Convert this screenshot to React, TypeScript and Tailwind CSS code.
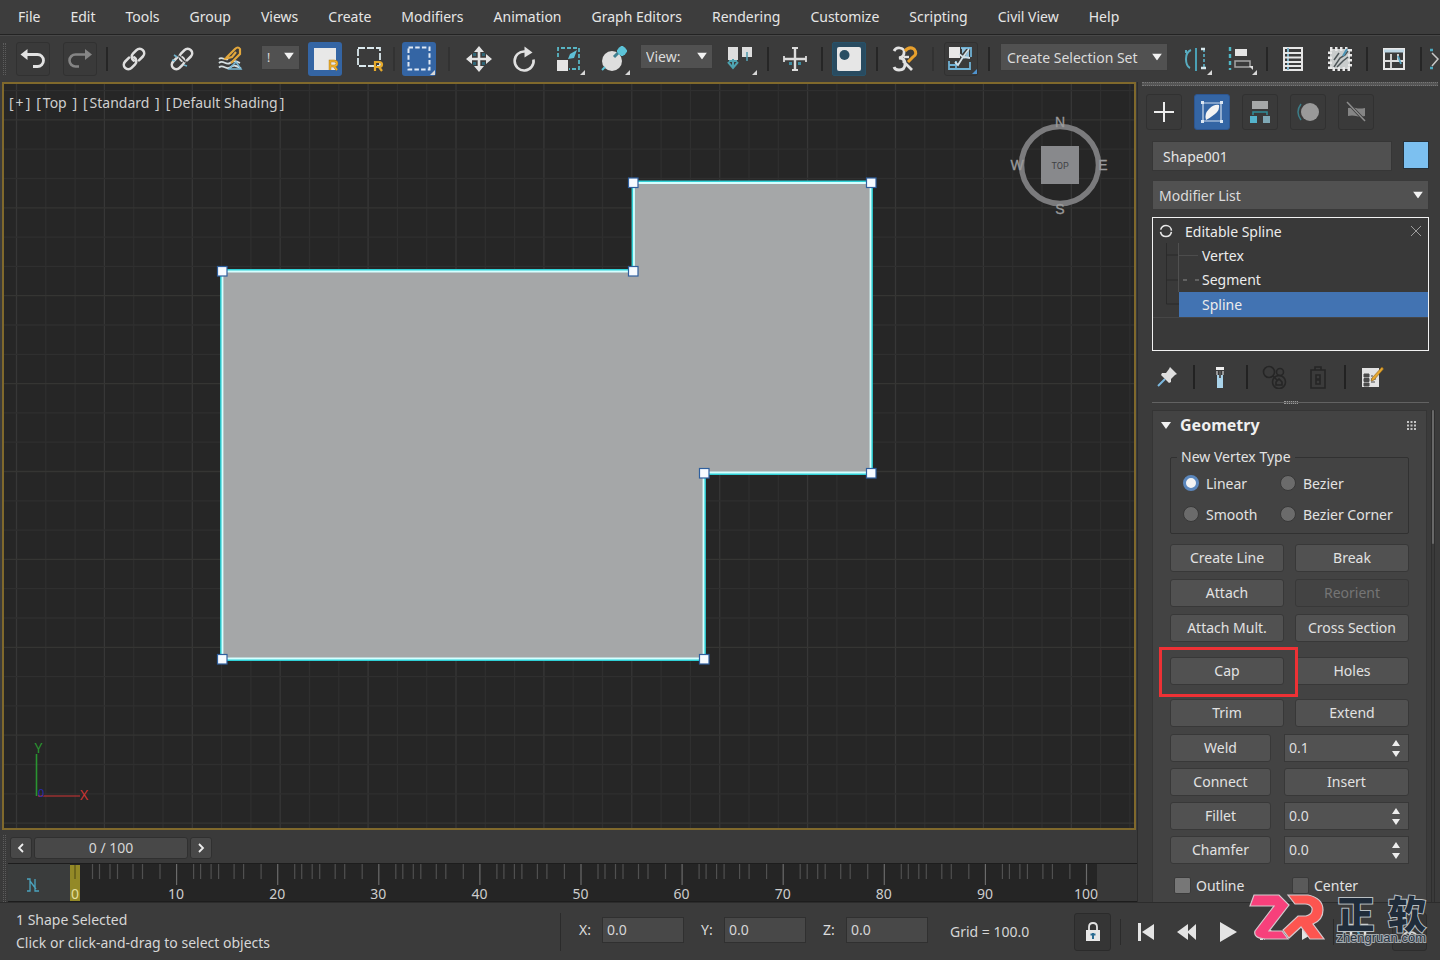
import React, { useState } from "react";

type Kids = { children?: React.ReactNode };

const MENUS = [
  "File", "Edit", "Tools", "Group", "Views", "Create", "Modifiers", "Animation",
  "Graph Editors", "Rendering", "Customize", "Scripting", "Civil View", "Help",
];

const Corner = ({ color = "#d8d8d8" }: { color?: string }) => <path d="M33 28v5h-5z" fill={color} />;

function Tool({ label, active, framed, children }: Kids & { label: string; active?: boolean; framed?: boolean }) {
  return (
    <button
      type="button"
      aria-label={label}
      className={
        "flex h-[34px] w-[34px] shrink-0 items-center justify-center rounded-[3px] " +
        (active ? "bg-[#3465a4]" : framed ? "border border-[#313131] bg-[#3a3a3a]" : "")
      }
    >
      <svg viewBox="0 0 34 34" className="h-[34px] w-[34px] shrink-0" fill="none">
        {children}
      </svg>
    </button>
  );
}

const Sep = () => <span className="block h-[24px] w-[2px] shrink-0 bg-[#262626]" />;

function Triangle({ className = "" }: { className?: string }) {
  return (
    <svg viewBox="0 0 10 7" className={"pointer-events-none h-[7px] w-[10px] " + className}>
      <path d="M0 0h10L5 7z" fill="#f2f2f2" />
    </svg>
  );
}

function Drop({ label, text, className, pad }: { label: string; text: string; className: string; pad: string }) {
  return (
    <div className={"relative shrink-0 " + className}>
      <select
        aria-label={label}
        className={"h-full w-full appearance-none border border-[#3a3a3a] bg-[#515151] text-[#dcdcdc] outline-none " + pad}
      >
        <option>{text}</option>
      </select>
      <Triangle className="absolute right-[6px] top-1/2 -translate-y-1/2" />
    </div>
  );
}

function Chain() {
  return (
    <g transform="rotate(-45 17 17)" stroke="#dedede" strokeWidth="2.6" strokeLinecap="round">
      <path d="M14.500 12.500H9a4.500 4.500 0 0 0 0 9h5a4.500 4.500 0 0 0 4.300-5.500" />
      <path d="M19.500 21.500H25a4.500 4.500 0 0 0 0-9h-5a4.500 4.500 0 0 0-4.300 5.500" />
    </g>
  );
}

function Toolbar() {
  return (
    <div className="flex h-[47px] shrink-0 items-center overflow-hidden border-t border-[#484848] bg-[#3b3b3b]">
      <span className="ml-[3px] mr-[10px] h-[32px] w-[3px] shrink-0 border-x border-dotted border-[#5c5c5c]" />
      <div className="flex items-center gap-[13px]">
        <Tool label="Undo" framed>
          <path d="M7 12.500h14.500a6 6 0 0 1 0 12H17" stroke="#e2e2e2" strokeWidth="2.800" />
          <path d="M4.500 12.500 11.500 7v11z" fill="#e2e2e2" />
        </Tool>
        <Tool label="Redo" framed>
          <path d="M26 12.500H12.500a6 6 0 0 0 0 12H16" stroke="#858585" strokeWidth="2.600" />
          <path d="m29 12.500-7-5.500v11z" fill="#858585" />
        </Tool>
      </div>
      <div className="mx-[9px]"><Sep /></div>
      <div className="flex items-center gap-[14px]">
        <Tool label="Select and Link"><Chain /></Tool>
        <Tool label="Unlink Selection">
          <Chain />
          <path d="m14 14 6 6" stroke="#3b3b3b" strokeWidth="1.500" />
          <path d="m9 13 3 2M19 23l3 1M7 18l3 1" stroke="#6fb3cc" strokeWidth="1.600" />
        </Tool>
        <Tool label="Bind to Space Warp">
          <path d="M6 21c4-4 7 3 11 0s6-2 10 0M6 25.500c4-4 7 3 11 0s6-2 11 1M6 17c3-3 6 2 9 0" stroke="#d5dfe2" strokeWidth="1.800" />
          <path d="m23 20 5 7H16z" stroke="#7ab9d6" strokeWidth="1.500" />
          <path d="m13 16 9-9q3-3 5 0v5l-9 9M11 17l8-2 4-5" stroke="#e2a73c" strokeWidth="2.200" />
        </Tool>
        <Drop label="Selection Filter" text="!" className="mb-[6px] h-[25px] w-[39px]" pad="pl-[5px] text-[12px]" />
      </div>
      <div className="ml-[8px] flex items-center gap-[10px]">
        <Tool label="Select Object" active>
          <path d="M6 6h22v22H6z" fill="#e8e8e8" />
          <path d="M22 28v-9h4q3 0 3 2.500T26 24h-4m4 0 3 4" stroke="#b07c17" strokeWidth="2.400" />
          <path d="M22 28v-9h4q3 0 3 2.500T26 24h-4m4 0 3 4" stroke="#efb02e" strokeWidth="1.400" />
        </Tool>
        <Tool label="Rectangular Selection Region">
          <path d="M6 6h22v18H6z" stroke="#dbe9ee" strokeWidth="1.800" strokeDasharray="7 2" />
          <path d="M23 29v-9h4q3 0 3 2.500T27 25h-4m4 0 3 4" stroke="#e6aa2b" strokeWidth="2.200" />
        </Tool>
      </div>
      <div className="mx-[7px] opacity-40"><Sep /></div>
      <Tool label="Window Crossing" active>
        <path d="M6.500 5.500h21v22h-21z" stroke="#dfe9f5" strokeWidth="2" strokeDasharray="4.500 2.200" />
        <Corner />
      </Tool>
      <div className="mx-[12px] opacity-40"><Sep /></div>
      <div className="flex items-center gap-[11px]">
        <Tool label="Select and Move">
          <path d="M17 7v20M7 17h20" stroke="#e4e4e4" strokeWidth="2.600" />
          <path d="m17 4 5 6H12zM17 30l5-6H12zM4 17l6-5v10zM30 17l-6-5v10z" fill="#e4e4e4" />
          <path d="M11 11h3v3h-3zM20 11h3v3h-3zM11 20h3v3h-3zM20 20h3v3h-3z" fill="#2f6576" />
        </Tool>
        <Tool label="Select and Rotate">
          <path d="M18 9.500a9.500 9.500 0 1 0 8.500 8" stroke="#e0e0e0" strokeWidth="2.600" />
          <path d="m17.500 4.500 8 6-8 5z" fill="#e0e0e0" />
        </Tool>
        <Tool label="Select and Scale">
          <path d="M6 15V6h21v21H17" stroke="#58b5c4" strokeWidth="1.800" strokeDasharray="4 2" />
          <path d="M5 18h11v11H5z" fill="#e4e4e4" />
          <path d="m25 8-3 8-6 1 2-5z" fill="#5fc0d6" />
          <Corner />
        </Tool>
        <Tool label="Select and Place">
          <circle cx="15" cy="19" r="10" fill="#dedede" />
          <path d="m17 15 5-5" stroke="#3f7f90" strokeWidth="3" />
          <circle cx="25" cy="9" r="4.500" fill="#5cc3d8" />
          <path d="M25 4v10M20 9h10" stroke="#5cc3d8" strokeWidth="2.500" />
          <path d="m5 28 3-3" stroke="#5cc3d8" strokeWidth="2" />
          <Corner />
        </Tool>
      </div>
      <div className="ml-[9px] flex items-center gap-[11px]">
        <Drop label="Reference Coordinate System" text="View:" className="mb-[6px] h-[25px] w-[73px]" pad="pl-[5px] text-[14px]" />
        <Tool label="Use Pivot Point Center">
          <path d="M4 5h10v13H4zM18 5h10v10H18z" fill="#dedede" />
          <path d="M23 10v9" stroke="#559daf" strokeWidth="1.600" />
          <path d="M9 17v9M4 20l5 6 5-6M5 19h8" stroke="#4ea3b0" strokeWidth="2" />
          <Corner />
        </Tool>
      </div>
      <div className="mx-[9px]"><Sep /></div>
      <Tool label="Select and Manipulate">
        <path d="M17 6v22M6 17h22" stroke="#dcdcdc" strokeWidth="2.400" />
        <path d="M14 6h6M14 28h6M6 14v6M28 14v6" stroke="#dcdcdc" strokeWidth="1.800" />
        <path d="M11 20h3v3h-3zM20 20h3v3h-3z" fill="#3c8ca0" />
      </Tool>
      <div className="mx-[9px]"><Sep /></div>
      <button type="button" aria-label="Keyboard Shortcut Override" className="flex h-[34px] w-[34px] shrink-0 items-center justify-center rounded-[2px] border border-[#275269] bg-[#294b60]">
        <svg viewBox="0 0 24 24" className="h-[24px] w-[24px]">
          <rect width="24" height="24" rx="2" fill="#e6e6e6" />
          <circle cx="7.500" cy="8" r="5" fill="#2a4f63" />
        </svg>
      </button>
      <div className="mx-[10px]"><Sep /></div>
      <Tool label="Snaps Toggle">
        <path d="M6 9q2-4 6-3 5 1 4 5 0 4-5 5 6 0 6 6t-6 6q-4 0-5-3M15 19l9 9" stroke="#e2e2e2" strokeWidth="2.800" />
        <path d="M17 9q4-5 9-2 4 5-1 8l-5 5" stroke="#e8a02c" strokeWidth="3" />
        <path d="m16 15 5 0" stroke="#e2e2e2" strokeWidth="2.400" />
      </Tool>
      <div className="mx-[10px] opacity-40"><Sep /></div>
      <Tool label="Angle Snap" framed>
        <path d="M5 5h11v11H5z" fill="#e8e8e8" />
        <path d="M17 6h10v9M5 19v8h21v-7M12 19v7M5 23h8" stroke="#6fb1d4" strokeWidth="1.800" />
        <path d="M18 6h5l-5 6zM25 8v7l-6 2z" fill="#8fc0dc" />
        <path d="m25 7-6 8-5 8-3-3M15 12l4 3 7 1" stroke="#d3dfe6" strokeWidth="1.800" />
        <path d="M33 27v5h-5z" fill="#4f93cf" />
      </Tool>
      <div className="mx-[10px]"><Sep /></div>
      <Drop label="Named Selection Sets" text="Create Selection Set" className="mb-[4px] h-[28px] w-[168px]" pad="pl-[6px] text-[14px]" />
      <div className="ml-[11px] flex items-center gap-[11px]">
        <Tool label="Mirror">
          <path d="M17 6v23" stroke="#4aa0b5" strokeWidth="2" />
          <path d="M12 8Q7 10 7 17t4 9M7 8v3" stroke="#58acc0" strokeWidth="2" />
          <path d="M25 7v18" stroke="#57a6ba" strokeWidth="1.800" strokeDasharray="3 2" />
          <path d="M22 26h5M22 7h4" stroke="#d7e7ec" strokeWidth="2.400" />
          <Corner />
        </Tool>
        <Tool label="Align">
          <path d="M6 5v23" stroke="#4fb7c6" strokeWidth="2.400" strokeDasharray="4 3" />
          <path d="M11 7h12v7H11z" fill="#e4e4e4" />
          <path d="M11 19h15v6H11z" stroke="#a5a5a5" strokeWidth="1.500" />
          <path d="M25 24h4v4" fill="#dedede" />
          <Corner />
        </Tool>
      </div>
      <div className="mx-[8px]"><Sep /></div>
      <div className="flex items-center gap-[13px]">
        <Tool label="Layer Explorer">
          <path d="M8 6h18v22H8z" stroke="#e6e6e6" strokeWidth="2" />
          <path d="M12 6v22" stroke="#7db2c9" strokeWidth="2" />
          <path d="M8 11h18M8 15.500h18M8 20h18M8 24h18" stroke="#e6e6e6" strokeWidth="1.800" />
        </Tool>
        <Tool label="Toggle Ribbon">
          <path d="M7 7h20v20H7z" fill="#c9cccc" />
          <path d="M7 7h20v20H7z" stroke="#e8e8e8" strokeWidth="4" strokeDasharray="2.500 2.500" />
          <path d="m11 25 6-9 5-3 3-4M14 25l6-6 5-4M11 18l5-7" stroke="#4d5558" strokeWidth="1.500" />
          <path d="m24 7-4 7" stroke="#4b94b6" strokeWidth="2" />
        </Tool>
      </div>
      <div className="mx-[9px]"><Sep /></div>
      <Tool label="Curve Editor">
        <path d="M7 7h20v20H7z" stroke="#e8e8e8" strokeWidth="2" />
        <path d="M7 9h20" stroke="#bcd6e4" strokeWidth="3" />
        <path d="M14 12v15M7 19h20M21 12v8" stroke="#dedede" strokeWidth="1.800" />
        <path d="m21 14 3 8" stroke="#5ba7c5" strokeWidth="1.800" />
      </Tool>
      <div className="ml-[9px] mr-[7px]"><Sep /></div>
      <button type="button" aria-label="More tools" className="shrink-0">
        <svg viewBox="0 0 12 26" className="h-[26px] w-[12px]" fill="none">
          <path d="m3 7 6 6-6 7" stroke="#c9c9c9" strokeWidth="1.500" />
          <path d="M1 4h3M1 22h3" stroke="#4ba6bd" strokeWidth="2.500" />
        </svg>
      </button>
    </div>
  );
}

const STEP = 29.3;
const PTS: [number, number][] = [
  [222, 271], [633, 271], [633, 182.5], [871, 182.5], [871, 473], [704, 473], [704, 659], [222, 659],
];
const OUTER = "221.500,270.500 633,270.500 633,182 871.500,182 871.500,473.500 704.500,473.500 704.500,659.500 221.500,659.500";
const INNER = "222.500,271.500 634,271.500 634,183 870.500,183 870.500,472.500 703.500,472.500 703.500,658.500 222.500,658.500";

function Viewport() {
  const cols = Array.from({ length: 90 }, (_, i) => i);
  const rows = Array.from({ length: 50 }, (_, i) => i);
  return (
    <div className="relative ml-[2px] mr-px min-h-[480px] flex-1 overflow-hidden border-2 border-[#80692c] bg-[#262626]">
      <svg className="absolute inset-0 h-full w-full" fill="none">
        <g transform="translate(-4 -84)">
          {cols.map((i) => (
            <path key={"c" + i} d={`M${16.500 + i * STEP} 80V1600`} stroke={i % 3 === 0 ? "#373737" : "#2f2f2f"} strokeWidth="1.3" />
          ))}
          {rows.map((i) => (
            <path key={"r" + i} d={`M0 ${90.600 + i * STEP}H2700`} stroke={i % 3 === 1 ? "#353533" : "#2f2f2f"} strokeWidth="1.3" />
          ))}
          <polygon points={OUTER} fill="#a5a7a8" stroke="#2fd0d6" strokeWidth="2.800" />
          <polygon points={INNER} stroke="#d5ffff" strokeWidth="1.800" />
          {PTS.map(([x, y]) => (
            <rect key={x + "-" + y} x={x - 4.500} y={y - 4.500} width="9.500" height="9.500" fill="#f7fbff" stroke="#2f5f9e" strokeWidth="1.200" />
          ))}
          <path d="M36.500 754v42" stroke="#2a9431" strokeWidth="1.600" />
          <path d="M38 796h42" stroke="#9a3030" strokeWidth="1.600" />
          <g fontFamily="Noto Sans, sans-serif" fontSize="14">
            <text x="34.500" y="753" fill="#2a9431">Y</text>
            <text x="80" y="800" fill="#c93434">X</text>
            <text x="38" y="797" fontSize="11" fill="#2a2ab0">0</text>
          </g>
        </g>
      </svg>
      <p className="relative flex gap-[6px] px-[5px] py-[8px] text-[14px] leading-[22px] text-[#cfcfcf]">
        {["+", "Top ", "Standard ", "Default Shading"].map((t) => (
          <span key={t} className="whitespace-pre">[<span className="px-[2px]">{t}</span>]</span>
        ))}
      </p>
      <svg viewBox="0 0 100 104" className="absolute right-[25px] top-[29px] h-[104px] w-[100px]" fill="none" aria-label="View cube">
        <circle cx="51" cy="52" r="38.500" stroke="#7b7b7d" strokeWidth="5.500" />
        <rect x="32" y="33" width="38" height="38" fill="#88898c" />
        <g fontFamily="Liberation Sans, sans-serif" fontSize="14" fill="#9a9a9b" stroke="#9a9a9b" strokeWidth=".3" textAnchor="middle">
          <text x="51" y="14">N</text>
          <text x="8" y="57">W</text>
          <text x="94" y="57">E</text>
          <text x="51" y="101">S</text>
        </g>
        <text x="51" y="56" fontFamily="Roboto, sans-serif" fontSize="9" fill="#404145" textAnchor="middle">TOP</text>
      </svg>
    </div>
  );
}

const MINOR = [17.500, 24.500, 35, 42.500, 58, 67.500, 85];

function Timeline() {
  const decades = Array.from({ length: 11 }, (_, i) => i);
  const step = "flex h-[22px] w-[22px] items-center justify-center rounded-[3px] border border-[#303030] bg-[#484848]";
  return (
    <div className="flex h-[72px] shrink-0 bg-[#3a3a3a]">
      <span className="ml-[3px] mr-[2px] mt-[5px] w-[3px] border-x border-dotted border-[#5c5c5c]" />
      <div className="flex min-w-0 flex-1 flex-col">
        <div className="flex h-[33px] items-center gap-[2px] pl-[2px] pt-[2px]">
          <button type="button" aria-label="Previous frame" className={step}>
            <svg viewBox="0 0 8 10" className="h-[10px] w-[8px]" fill="none"><path d="M6 1 2 5l4 4" stroke="#eee" strokeWidth="1.800" /></svg>
          </button>
          <button type="button" className="h-[22px] w-[154px] rounded-[3px] border border-[#303030] bg-[#484848] text-[14px] leading-[18px] text-[#d6d6d6]">0 / 100</button>
          <button type="button" aria-label="Next frame" className={step}>
            <svg viewBox="0 0 8 10" className="h-[10px] w-[8px]" fill="none"><path d="m2 1 4 4-4 4" stroke="#eee" strokeWidth="1.800" /></svg>
          </button>
        </div>
        <div className="flex flex-1 border-y border-[#1d1d1d]">
          <button type="button" aria-label="Open Mini Curve Editor" className="flex w-[62px] shrink-0 items-center justify-center bg-[#3a3c3c] pr-[12px] pt-[4px]">
            <svg viewBox="0 0 12 14" className="h-[14px] w-[12px]" fill="none">
              <path d="M0 1h3v12H0M3 3l6 8M8 1v12h4" stroke="#4ba3bd" strokeWidth="1.300" />
            </svg>
          </button>
          <svg className="h-[37px] min-w-0 flex-1 overflow-visible bg-[#252525]">
            <rect x="1027" width="40" height="37" fill="#383838" />
            <rect x="0" y="1" width="10" height="36" fill="#938927" />
            <path d="M5 1v14" stroke="#5c5618" strokeWidth="1.300" />
            {decades.map((d) => (
              <g key={d} transform={`translate(${5 + d * 101.1} 0)`}>
                {d > 0 && <path d="M.5 0v21" stroke="#6b6b6b" strokeWidth="1.200" />}
                {d < 10 && MINOR.map((m) => <path key={m} d={`M${m} 0v15`} stroke="#505050" strokeWidth="1.200" />)}
                <text x="0" y="35" fill={d ? "#cdcdcd" : "#e4df9c"} fontFamily="Noto Sans, sans-serif" fontSize="14" textAnchor="middle">{d * 10}</text>
              </g>
            ))}
          </svg>
        </div>
      </div>
    </div>
  );
}

function Tab({ label, active, children }: Kids & { label: string; active?: boolean }) {
  return (
    <button
      type="button"
      aria-label={label}
      className={"flex h-[36px] w-[36px] items-center justify-center rounded-[3px] border " + (active ? "border-[#2c5590] bg-[#3465a4]" : "border-[#313131] bg-[#3a3a3a]")}
    >
      <svg viewBox="0 0 24 24" className="h-[24px] w-[24px]" fill="none">{children}</svg>
    </button>
  );
}

function Btn({ children, disabled, className = "" }: Kids & { disabled?: boolean; className?: string }) {
  return (
    <button
      type="button"
      disabled={disabled}
      className={
        "h-[28px] rounded-[3px] border border-[#383838] text-[14px] leading-[20px] " +
        (disabled ? "bg-[#434343] text-[#757575] " : "bg-[#515151] text-[#e2e2e2] ") + className
      }
    >
      {children}
    </button>
  );
}

function Spinner({ label, value }: { label: string; value: string }) {
  return (
    <div className="relative h-[28px] flex-1 border border-[#383838] bg-[#525252]">
      <input aria-label={label} defaultValue={value} className="block h-[24px] w-full bg-transparent pl-[4px] text-[14px] text-[#dedede] outline-none" />
      <svg viewBox="0 0 8 18" className="pointer-events-none absolute right-[8px] top-[5px] h-[18px] w-[8px]" fill="#ededed">
        <path d="M4 0l4 6H0zM4 17l4-6H0z" />
      </svg>
    </div>
  );
}

function Pair({ left, right, off }: { left: string; right: string; off?: boolean }) {
  return (
    <div className="grid grid-cols-2 gap-[11px]">
      <Btn>{left}</Btn>
      <Btn disabled={off}>{right}</Btn>
    </div>
  );
}

function Geometry() {
  const [type, setType] = useState("Linear");
  return (
    <div className="flex min-h-0 flex-1 justify-between pl-[14px] pr-[5px] pt-[7px]">
      <section className="flex w-[275px] flex-col border border-b-0 border-[#353535] bg-[#434343] px-[17px]">
        <h2 className="-mx-[9px] flex h-[28px] items-center text-[16px] font-bold text-[#f0f0f0]">
          <Triangle />
          <span className="ml-[9px] flex-1">Geometry</span>
          <svg viewBox="0 0 9 9" className="mr-[2px] h-[9px] w-[9px]" fill="#c4c4c4">
            <path d="M0 0h2v2H0zM3.500 0h2v2h-2zM7 0h2v2H7zM0 3.500h2v2H0zM3.500 3.500h2v2h-2zM7 3.500h2v2H7zM0 7h2v2H0zM3.500 7h2v2h-2zM7 7h2v2H7z" />
          </svg>
        </h2>
        <fieldset className="mt-[7px] h-[88px] rounded-[2px] border border-[#313131] px-[12px]">
          <legend className="-ml-[6px] px-[4px] text-[14px] leading-[22px] text-[#e2e2e2]">New Vertex Type</legend>
          <div className="grid grid-cols-[97px_1fr] gap-y-[9px] pt-[4px]">
            {["Linear", "Bezier", "Smooth", "Bezier Corner"].map((t) => (
              <label key={t} className="flex h-[22px] items-center gap-[7px] whitespace-nowrap text-[14px] text-[#e2e2e2]">
                <input
                  type="radio"
                  name="vertex-type"
                  checked={type === t}
                  onChange={() => setType(t)}
                  className="h-[16px] w-[16px] appearance-none rounded-full border border-[#383838] bg-[#6b6b6b] checked:border-[3px] checked:border-[#5b87bd] checked:bg-[#f4f4f4]"
                />
                {t}
              </label>
            ))}
          </div>
        </fieldset>
        <div className="mt-[10px] flex flex-col gap-[7px]">
          <Pair left="Create Line" right="Break" />
          <Pair left="Attach" right="Reorient" off />
          <Pair left="Attach Mult." right="Cross Section" />
        </div>
        <div className="relative mb-[14px] mt-[15px]">
          <Pair left="Cap" right="Holes" />
          <span className="pointer-events-none absolute -bottom-[12px] -left-[11px] -top-[10px] w-[139px] border-[3px] border-[#ee3135]" />
        </div>
        <div className="flex flex-col gap-[7px]">
          <Pair left="Trim" right="Extend" />
          <div className="flex flex-col gap-[6px]">
            <div className="flex gap-[13px]"><Btn className="w-[101px]">Weld</Btn><Spinner label="Weld threshold" value="0.1" /></div>
            <div className="flex gap-[13px]"><Btn className="w-[101px]">Connect</Btn><Btn className="flex-1">Insert</Btn></div>
            <div className="flex gap-[13px]"><Btn className="w-[101px]">Fillet</Btn><Spinner label="Fillet amount" value="0.0" /></div>
            <div className="flex gap-[13px]"><Btn className="w-[101px]">Chamfer</Btn><Spinner label="Chamfer amount" value="0.0" /></div>
          </div>
        </div>
        <div className="mt-[10px] grid grid-cols-[118px_1fr] pl-[4px]">
          {["Outline", "Center"].map((t, i) => (
            <label key={t} className="flex h-[22px] items-center gap-[5px] text-[14px] text-[#e2e2e2]">
              <input type="checkbox" className={"h-[17px] w-[17px] appearance-none rounded-[2px] border border-[#3a3a3a] checked:bg-[#3465a4] " + (i ? "bg-[#5a5a5a]" : "bg-[#777777]")} />
              {t}
            </label>
          ))}
        </div>
      </section>
      <div className="w-[4px] border-x border-[#2e2e2e] bg-[#3a3a3a]"><div className="h-[134px] rounded bg-[#686868]" /></div>
    </div>
  );
}

function CommandPanel() {
  return (
    <aside className="flex w-[303px] shrink-0 flex-col border-l border-[#2c2c2c] bg-[#3b3b3b]">
      <div className="ml-[4px] mr-[2px] h-[4px] border-y border-dotted border-[#777] bg-[#555]" />
      <div className="flex gap-[12px] pl-[8px] pt-[8px]">
        <Tab label="Create"><path d="M12 2v20M2 12h20" stroke="#ededed" strokeWidth="2" /></Tab>
        <Tab label="Modify" active>
          <path d="M3 3h18v18H3z" stroke="#cfdded" strokeWidth="1.200" />
          <path d="M1 1h3v3H1zM20 1h3v3h-3zM1 20h3v3H1zM20 20h3v3h-3z" fill="#dbe6f2" />
          <path d="M6 20Q4 14 9 9t10-4q1 5-4 9t-9 6z" fill="#f3f3f3" />
        </Tab>
        <Tab label="Hierarchy">
          <path d="M4 1h16v8H4z" fill="#a6a8a8" />
          <path d="M5 15v-3h14v3" stroke="#2f8f9b" strokeWidth="1.500" />
          <path d="M2 16h7v7H2z" fill="#54b3cb" />
          <path d="M15 16h7v7h-7z" fill="#7fa9b6" />
        </Tab>
        <Tab label="Motion">
          <circle cx="14" cy="12" r="9" fill="#9a9a9a" />
          <path d="M5 4q-6 8 0 16" stroke="#3c7d88" strokeWidth="1.500" />
        </Tab>
        <Tab label="Display">
          <path d="M4 8q5-1 8 0t9 0v8q-5 1-9 0t-8 0z" fill="#858585" />
          <path d="m3 2 18 19" stroke="#3a3a3a" strokeWidth="3" />
          <path d="m3 2 18 19" stroke="#8d8d8d" strokeWidth="1.500" />
        </Tab>
      </div>
      <div className="mt-[11px] flex gap-[11px] pl-[14px] pr-[11px]">
        <input aria-label="Object name" defaultValue="Shape001" className="h-[30px] w-[200px] min-w-0 flex-1 border border-[#363636] bg-[#505050] pl-[10px] text-[14px] text-[#e6e6e6] outline-none" />
        <button type="button" aria-label="Object color" className="h-[28px] w-[26px] border border-[#26313a] bg-[#7cc0f0]" />
      </div>
      <Drop label="Modifier List" text="Modifier List" className="ml-[14px] mr-[11px] mt-[9px] h-[30px]" pad="pl-[6px] text-[14px]" />
      <div className="ml-[14px] mr-[11px] mt-[7px] h-[134px] border border-[#f2f2f2] bg-[#393939] pt-[1px] text-[14px] text-[#ececec]">
        <div className="flex h-[24px] items-center pl-[6px] pr-[6px]">
          <svg viewBox="0 0 14 14" className="h-[14px] w-[14px]" fill="none">
            <circle cx="7" cy="7" r="5.500" stroke="#e9e9e9" strokeWidth="1.600" strokeDasharray="15 2.300" strokeDashoffset="-1" />
          </svg>
          <span className="ml-[12px] flex-1">Editable Spline</span>
          <svg viewBox="0 0 12 12" className="h-[12px] w-[12px]"><path d="m1 1 10 10M11 1 1 11" stroke="#9c9c9c" /></svg>
        </div>
        <div className="flex">
          <svg viewBox="0 0 26 73" className="h-[73px] w-[26px] shrink-0" fill="none">
            <path d="M13.500 0v61H26M13.500 12H26M13.500 37H26" stroke="#2b2b2b" />
            <path d="M25.500 0v49" stroke="#505050" />
          </svg>
          <ul className="flex-1">
            <li className="flex h-[24px] items-center"><span className="mr-[4px] w-[19px] border-t border-[#4c4c4c]" />Vertex</li>
            <li className="flex h-[25px] items-center">
              <svg viewBox="0 0 23 2" className="h-[2px] w-[23px]"><path d="M4 1h4M16 1h4" stroke="#8c8c8c" strokeWidth="1.200" /></svg>
              Segment
            </li>
            <li className="flex h-[25px] items-center bg-[#4273b2] pl-[23px]">Spline</li>
          </ul>
        </div>
        <div className="border-t border-[#464646]" />
      </div>
      <div className="flex h-[51px] items-center pl-[17px]">
        <button type="button" aria-label="Pin Stack">
          <svg viewBox="0 0 24 24" className="h-[24px] w-[24px]" fill="none">
            <path d="m10 14-7 7" stroke="#7bb8df" strokeWidth="2" />
            <path d="m15 2 7 7-2 1-4 4v3l-2 1-8-8 1-2h4l3-4z" fill="#dedede" />
          </svg>
        </button>
        <span className="ml-[14px] mr-[13px] h-[24px] w-[2px] bg-[#222]" />
        <button type="button" aria-label="Show end result">
          <svg viewBox="0 0 24 24" className="h-[24px] w-[24px]" fill="none">
            <path d="M8 2h8v3H8z" fill="#eee" />
            <path d="M9 6v4M15 6v4" stroke="#b5b5b5" strokeWidth="1.500" />
            <path d="M9 10h6v13H9z" fill="#a9d3ea" />
            <path d="M12 6v7" stroke="#555" strokeWidth="2" />
          </svg>
        </button>
        <span className="ml-[14px] mr-[13px] h-[24px] w-[2px] bg-[#222]" />
        <button type="button" aria-label="Make unique">
          <svg viewBox="0 0 28 24" className="h-[24px] w-[28px]" fill="none" stroke="#262626" strokeWidth="1.600">
            <circle cx="8" cy="7" r="5.500" /><circle cx="18" cy="17" r="6.500" /><circle cx="19" cy="7" r="3.500" /><path d="m12 11 4 4M15 20v-3l3-3 3 3v3z" />
          </svg>
        </button>
        <button type="button" aria-label="Remove modifier" className="ml-[17px]">
          <svg viewBox="0 0 24 24" className="h-[24px] w-[24px]" fill="none" stroke="#262626" strokeWidth="1.600">
            <path d="M5 5h14v18H5zM9 5V2h6v3M10 10h4v4h-4zM10 15h4v4h-4z" />
          </svg>
        </button>
        <span className="ml-[14px] mr-[14px] h-[24px] w-[2px] bg-[#222]" />
        <button type="button" aria-label="Configure Modifier Sets">
          <svg viewBox="0 0 24 24" className="h-[24px] w-[24px]" fill="none">
            <path d="M2 3h17v19H2z" fill="#e2e2e2" />
            <path d="M4 9h5v3H4zM4 13.500h5v3H4zM4 18h5v3H4zM11 14h5M11 17h4M11 11h2" fill="#4a4a4a" stroke="#4a4a4a" />
            <path d="M22 2 12 13l-1 3 3-1L23.500 4z" fill="#e6a730" stroke="#8a6218" strokeWidth=".6" />
          </svg>
        </button>
      </div>
      <div className="ml-[14px] mr-[11px] flex h-[1px] items-center justify-center bg-[#626262]">
        <span className="h-[3px] w-[14px] border-y border-dotted border-[#999] bg-[#555]" />
      </div>
      <Geometry />
    </aside>
  );
}

function Coord({ axis }: { axis: string }) {
  return (
    <label className="flex items-center gap-[9px] text-[14px] text-[#dcdcdc]">
      <span className="w-[14px]">{axis}:</span>
      <input defaultValue="0.0" className="h-[26px] w-[82px] border border-[#303030] bg-[#484848] pl-[4px] text-[14px] text-[#d6d6d6] outline-none" />
    </label>
  );
}

function Watermark() {
  return (
    <div className="pointer-events-none absolute right-[14px] top-[-10px] flex items-start gap-[11px]">
      <svg viewBox="0 0 76 50" className="h-[50px] w-[76px]" strokeWidth="1.200" stroke="#d4c9ce">
        <path d="M5 2h25l10 10-20 26h13l6 8H16q-12-1-10-8l19-25H1z" fill="#f7407b" />
        <path d="M39 2h20q15 3 15 15 0 10-10 14l11 15H61l-9-12-12 11-6-8 15-14h8q7-2 6-8-2-4-7-4H46z" fill="#fd5550" />
      </svg>
      <div className="flex flex-col items-stretch">
        <span lang="zh" className="flex justify-between font-['Noto_Sans_CJK_SC',sans-serif] text-[38px] font-black leading-[38px] text-[#202c3a] [-webkit-text-stroke:2px_#b9bfc3] [paint-order:stroke_fill]">
          <span>正</span><span>软</span>
        </span>
        <span className="font-['Liberation_Sans',sans-serif] text-[13px] leading-[14px] text-[#26313d] [-webkit-text-stroke:2px_#a4a9ad] [paint-order:stroke_fill]">zhengruan.com</span>
      </div>
    </div>
  );
}

function Transport({ label, d }: { label: string; d: string }) {
  return (
    <button type="button" aria-label={label}>
      <svg viewBox="0 0 24 24" className="h-[24px] w-[24px]" fill="#e4e4e4"><path d={d} /></svg>
    </button>
  );
}

function StatusBar() {
  return (
    <footer className="relative flex h-[58px] shrink-0 items-center border-t border-[#2c2c2c] bg-[#3b3b3b] text-[14px] text-[#d6d6d6]">
      <div className="min-w-0 flex-1 pb-[2px] pl-[16px] leading-[23px]">
        <p>1 Shape Selected</p>
        <p>Click or click-and-drag to select objects</p>
      </div>
      <span className="h-[38px] w-px bg-[#2b2b2b]" />
      <div className="ml-[18px] flex items-center gap-[17px] pb-[4px]">
        <Coord axis="X" />
        <Coord axis="Y" />
        <Coord axis="Z" />
      </div>
      <span className="ml-[22px] w-[117px]">Grid = 100.0</span>
      <button type="button" aria-label="Selection Lock" className="ml-[7px] flex h-[38px] w-[37px] items-center justify-center rounded-[3px] border border-[#2b2b2b] bg-[#353535]">
        <svg viewBox="0 0 14 20" className="h-[20px] w-[14px]" fill="none">
          <path d="M3 9V5q0-4 4-4t4 4v4" stroke="#e3e3e3" strokeWidth="1.800" />
          <path d="M0 8h14v11H0z" fill="#e8e8e8" />
          <path d="M7 11v6M4.500 12.500h5" stroke="#2c6c92" strokeWidth="2" />
        </svg>
      </button>
      <span className="ml-[9px] h-[26px] w-px bg-[#2b2b2b]" />
      <div className="ml-[13px] flex items-center gap-[17px]">
        <Transport label="Go to start" d="M4 3h3v18H4zM20 4v16L8 12z" />
        <Transport label="Previous frame" d="M13 4v16L2 12zM21 4v16L12 12z" />
        <Transport label="Play" d="M4 2l17 10L4 22z" />
        <Transport label="Next frame" d="M3 4h3v16H3zM7 4l9 8-9 8z" />
        <Transport label="Go to end" d="M4 4l14 8-14 8z" />
      </div>
      <span className="ml-[11px] h-[26px] w-px bg-[#2b2b2b]" />
      <button type="button" aria-label="Time configuration" className="ml-[12px]">
        <svg viewBox="0 0 24 24" className="h-[24px] w-[24px]" fill="none"><path d="M3 5h6v4M15 5h6v4M5 12v8M19 12v8" stroke="#e0e0e0" strokeWidth="2.500" /><path d="M10 8l4 8" stroke="#4d9ac0" strokeWidth="2" /></svg>
      </button>
      <button type="button" aria-label="Navigation" className="ml-[22px] mr-[13px] flex h-[38px] w-[35px] items-center justify-center rounded-[3px] border border-[#2d2d2d] bg-[#363636]">
        <svg viewBox="0 0 24 24" className="h-[24px] w-[24px]" fill="none"><path d="M12 5v14M4 18q2-6 8-6t8 6" stroke="#d8d8d8" strokeWidth="2" /></svg>
      </button>
      <Watermark />
    </footer>
  );
}

export default function App() {
  return (
    <div className="flex min-h-screen flex-col bg-[#3b3b3b] font-['Noto_Sans',sans-serif] text-[#e6e6e6]">
      <nav className="flex h-[35px] shrink-0 items-center gap-[30px] overflow-hidden border-b border-[#232323] bg-[#3d3d3d] pl-[18px]">
        {MENUS.map((m) => (
          <a key={m} href="#" className="shrink-0 whitespace-nowrap text-[14px] leading-[20px]">{m}</a>
        ))}
      </nav>
      <Toolbar />
      <main className="flex min-h-0 flex-1">
        <div className="flex min-w-0 flex-1 flex-col">
          <Viewport />
          <Timeline />
        </div>
        <CommandPanel />
      </main>
      <StatusBar />
    </div>
  );
}
